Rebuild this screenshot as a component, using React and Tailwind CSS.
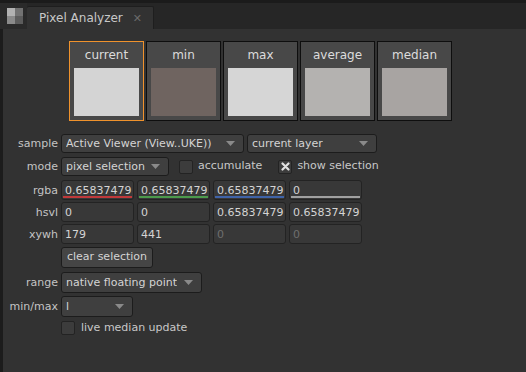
import React from 'react'

const font = { fontFamily: '"DejaVu Sans", Verdana, sans-serif' }

const swatches = [
  { name: 'current', color: '#d4d4d4', active: true },
  { name: 'min', color: '#6f6460' },
  { name: 'max', color: '#d6d6d6' },
  { name: 'average', color: '#b4b2b0' },
  { name: 'median', color: '#a8a4a2' },
]

const Caret = () => (
  <svg width="9" height="5" viewBox="0 0 9 5" className="shrink-0">
    <path d="M0 0 L9 0 L4.5 5 Z" fill="#8a8a8a" />
  </svg>
)

const Dropdown = ({ label, w }) => (
  <div className={`flex items-center justify-between h-[19px] pl-[4px] pr-[8px] rounded-[3px] border border-[#1c1c1c] bg-[#3f3f3f] text-[#d4d4d4] ${w}`}>
    <span className="truncate leading-none">{label}</span>
    <Caret />
  </div>
)

const Label = ({ children }) => (
  <div className="w-[55px] shrink-0 text-right text-[#c4c4c4] leading-none">{children}</div>
)

const Field = ({ value, line, dim }) => (
  <div className="relative w-[73px] h-[20px] rounded-[3px] border border-[#232323] bg-[#383838] flex items-center px-[3px]">
    <span className={`leading-none ${dim ? 'text-[#6e6e6e]' : 'text-[#d4d4d4]'}`}>{value}</span>
    {line && <div className={`absolute left-[1px] right-[1px] bottom-[1px] h-[2px] ${line}`} />}
  </div>
)

const Check = ({ checked }) => (
  <div className="w-[14px] h-[14px] rounded-[2px] border border-[#232323] bg-[#3c3c3c] flex items-center justify-center">
    {checked && (
      <svg width="9" height="9" viewBox="0 0 9 9">
        <path d="M1.5 1.5 L7.5 7.5 M7.5 1.5 L1.5 7.5" stroke="#e0e0e0" strokeWidth="2.2" strokeLinecap="round" />
      </svg>
    )}
  </div>
)

export default function App() {
  return (
    <div className="w-[526px] h-[372px] bg-[#323232] text-[11px] flex flex-col overflow-hidden" style={font}>
      {/* tab bar */}
      <div className="h-[29px] shrink-0 bg-[#262626] border-t-[3px] border-[#1b1b1b] flex items-end">
        <div className="w-[27px] h-[26px] flex items-center pl-[7px] bg-[#2a2a2a]">
          <div className="grid grid-cols-2 w-[16px] h-[16px]">
            <div className="bg-[#b2b2b2]" />
            <div className="bg-[#727272]" />
            <div className="bg-[#8a8a8a]" />
            <div className="bg-[#5c5c5c]" />
          </div>
        </div>
        <div className="w-[127px] h-[23px] bg-[#323232] rounded-t-[2px] border-t border-r border-[#1e1e1e] flex items-center pl-[12px] text-[#c8c8c8] text-[12px]">
          <span>Pixel Analyzer</span>
          <span className="ml-[10px] text-[#6a6a6a] text-[11px] font-bold leading-none">✕</span>
        </div>
      </div>

      {/* body */}
      <div className="flex-1 border-l-[3px] border-[#1c1c1c] flex flex-col">
        <div className="flex gap-[2px] pl-[66px] pt-[12px]">
          {swatches.map(s => (
            <div
              key={s.name}
              className={`w-[75px] h-[80px] bg-[#484848] border-[1px] ${s.active ? 'border-[#f0922c]' : 'border-[#0e0e0e]'} flex flex-col items-center`}
            >
              <div className="h-[26px] flex items-center text-[#dcdcdc] text-[12px]">{s.name}</div>
              <div className="w-[65px] h-[48px]" style={{ background: s.color }} />
            </div>
          ))}
        </div>

        <div className="flex flex-col pt-[13px]">
          <div className="flex items-center gap-[3px] h-[19px]">
            <Label>sample</Label>
            <Dropdown label="Active Viewer (View..UKE))" w="w-[183px]" />
            <Dropdown label="current layer" w="w-[130px]" />
          </div>

          <div className="flex items-center gap-[3px] h-[19px] mt-[4px]">
            <Label>mode</Label>
            <Dropdown label="pixel selection" w="w-[108px]" />
            <div className="ml-[7px]"><Check /></div>
            <span className="ml-[2px] text-[#c8c8c8]">accumulate</span>
            <div className="ml-[13px]"><Check checked /></div>
            <span className="ml-[2px] text-[#c8c8c8]">show selection</span>
          </div>

          <div className="flex items-center gap-[3px] mt-[4px]">
            <Label>rgba</Label>
            <Field value="0.65837479" line="bg-[#c0393b]" />
            <Field value="0.65837479" line="bg-[#4c9a4c]" />
            <Field value="0.65837479" line="bg-[#3f63a8]" />
            <Field value="0" line="bg-[#a0a0a0]" />
          </div>

          <div className="flex items-center gap-[3px] mt-[2px]">
            <Label>hsvl</Label>
            <Field value="0" />
            <Field value="0" />
            <Field value="0.65837479" />
            <Field value="0.65837479" />
          </div>

          <div className="flex items-center gap-[3px] mt-[2px]">
            <Label>xywh</Label>
            <Field value="179" />
            <Field value="441" />
            <Field value="0" dim />
            <Field value="0" dim />
          </div>

          <div className="flex items-center gap-[3px] mt-[3px]">
            <div className="w-[55px] shrink-0" />
            <div className="h-[21px] px-[5px] rounded-[3px] border border-[#1c1c1c] bg-[#454545] text-[#d4d4d4] flex items-center">clear selection</div>
          </div>

          <div className="flex items-center gap-[3px] h-[21px] mt-[4px]">
            <Label>range</Label>
            <Dropdown label="native floating point" w="w-[141px] h-[21px]" />
          </div>

          <div className="flex items-center gap-[3px] h-[21px] mt-[3px]">
            <Label>min/max</Label>
            <Dropdown label="l" w="w-[72px] h-[21px]" />
          </div>

          <div className="flex items-center gap-[3px] mt-[3px]">
            <div className="w-[55px] shrink-0" />
            <Check />
            <span className="ml-[3px] text-[#c8c8c8]">live median update</span>
          </div>
        </div>
      </div>
    </div>
  )
}
